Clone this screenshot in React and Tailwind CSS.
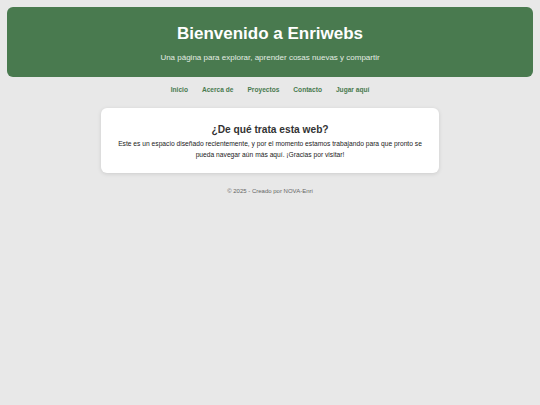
export default function App() {
  return (
    <div className="min-h-[405px] w-full bg-[#e8e8e8] pt-[7px] px-[7px]" style={{ fontFamily: '"Liberation Sans", Arial, sans-serif' }}>
      <header className="bg-[#497a4f] rounded-[6px] h-[70px] flex flex-col items-center justify-start pt-[15px] text-white">
        <h1 className="text-[17px] font-bold leading-[24px]">Bienvenido a Enriwebs</h1>
        <p className="text-[8px] leading-[12px] mt-[6px] text-[#e3ece3]">Una página para explorar, aprender cosas nuevas y compartir</p>
      </header>
      <nav className="flex justify-center gap-[14px] mt-[8px] text-[6.6px] font-bold text-[#497a4f] leading-[10px]">
        <span>Inicio</span>
        <span>Acerca de</span>
        <span>Proyectos</span>
        <span>Contacto</span>
        <span>Jugar aquí</span>
      </nav>
      <main className="mx-auto mt-[13px] w-[338px] h-[65px] bg-white rounded-[6px] shadow-[0_1px_4px_rgba(0,0,0,0.12)] flex flex-col items-center pt-[15px] px-[12px]">
        <h2 className="text-[10.2px] font-bold text-[#333] leading-[14px]">¿De qué trata esta web?</h2>
        <p className="text-[6.7px] text-[#222] text-center leading-[11px] mt-[1px]">Este es un espacio diseñado recientemente, y por el momento estamos trabajando para que pronto se pueda navegar aún más aquí. ¡Gracias por visitar!</p>
      </main>
      <footer className="text-center text-[6px] text-[#666] mt-[14px] leading-[9px]">© 2025 - Creado por NOVA-Enri</footer>
    </div>
  );
}
